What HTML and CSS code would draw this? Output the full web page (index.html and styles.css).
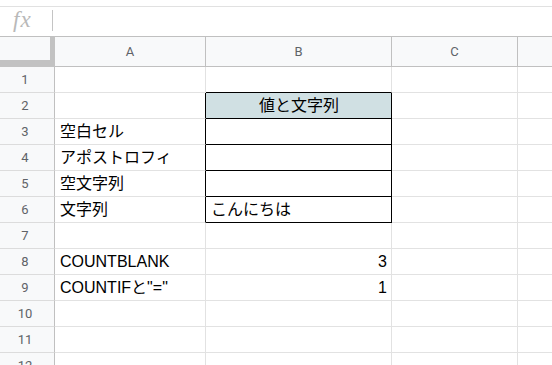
FILE: index.html
```html
<!DOCTYPE html>
<html lang="ja">
<head>
<meta charset="utf-8">
<title>Sheet</title>
<link rel="stylesheet" href="styles.css">
</head>
<body>
<div class="app">
  <div class="topstrip"></div>
  <div class="formula">
    <span class="fx">fx</span>
    <span class="fx-sep"></span>
  </div>
  <div class="sheet">
    <div class="corner"></div>
    <div class="colhead">A</div>
    <div class="colhead">B</div>
    <div class="colhead">C</div>
    <div class="colhead"></div>

    <div class="rowhead">1</div>
    <div class="cell"></div>
    <div class="cell box-top"></div>
    <div class="cell"></div>
    <div class="cell"></div>

    <div class="rowhead">2</div>
    <div class="cell box-left"></div>
    <div class="cell box title">値と文字列</div>
    <div class="cell"></div>
    <div class="cell"></div>

    <div class="rowhead">3</div>
    <div class="cell box-left">空白セル</div>
    <div class="cell box"></div>
    <div class="cell"></div>
    <div class="cell"></div>

    <div class="rowhead">4</div>
    <div class="cell box-left">アポストロフィ</div>
    <div class="cell box"></div>
    <div class="cell"></div>
    <div class="cell"></div>

    <div class="rowhead">5</div>
    <div class="cell box-left">空文字列</div>
    <div class="cell box"></div>
    <div class="cell"></div>
    <div class="cell"></div>

    <div class="rowhead">6</div>
    <div class="cell box-left">文字列</div>
    <div class="cell box">こんにちは</div>
    <div class="cell"></div>
    <div class="cell"></div>

    <div class="rowhead">7</div>
    <div class="cell"></div>
    <div class="cell"></div>
    <div class="cell"></div>
    <div class="cell"></div>

    <div class="rowhead">8</div>
    <div class="cell">COUNTBLANK</div>
    <div class="cell num">3</div>
    <div class="cell"></div>
    <div class="cell"></div>

    <div class="rowhead">9</div>
    <div class="cell">COUNTIFと"="</div>
    <div class="cell num">1</div>
    <div class="cell"></div>
    <div class="cell"></div>

    <div class="rowhead">10</div>
    <div class="cell"></div>
    <div class="cell"></div>
    <div class="cell"></div>
    <div class="cell"></div>

    <div class="rowhead">11</div>
    <div class="cell"></div>
    <div class="cell"></div>
    <div class="cell"></div>
    <div class="cell"></div>

    <div class="rowhead">12</div>
    <div class="cell"></div>
    <div class="cell"></div>
    <div class="cell"></div>
    <div class="cell"></div>
  </div>
</div>
</body>
</html>
```

FILE: styles.css
```css
* {
  box-sizing: border-box;
}

html, body {
  margin: 0;
  padding: 0;
  background: #ffffff;
}

.app {
  width: 552px;
  height: 365px;
  overflow: hidden;
  font-family: "Liberation Sans", Arial, "Noto Sans CJK JP", sans-serif;
}

/* thin strip above the formula bar */
.topstrip {
  height: 7px;
  border-bottom: 1px solid #e1e1e1;
}

.formula {
  height: 29px;
  display: flex;
  align-items: center;
  padding-left: 13px;
}

.fx {
  font-family: "Liberation Serif", "Times New Roman", serif;
  font-style: italic;
  font-size: 23px;
  color: #b9b9b9;
  line-height: 1;
  margin-top: -5px;
  letter-spacing: 1px;
}

.fx-sep {
  width: 1px;
  height: 21px;
  background: #c4c4c4;
  margin-left: 20px;
  margin-top: -3px;
}

/* spreadsheet grid */
.sheet {
  display: grid;
  grid-template-columns: 55px 151px 186px 126px 200px;
  grid-template-rows: 31px;
  grid-auto-rows: 26px;
}

.corner,
.colhead {
  background: #f8f9fa;
  border-top: 1px solid #c0c0c0;
  border-bottom: 1px solid #c0c0c0;
  border-right: 1px solid #c0c0c0;
}

/* freeze handles in the top-left corner */
.corner {
  border-right: 5px solid #c2c2c2;
  border-bottom: 7px solid #c2c2c2;
}

.colhead {
  display: flex;
  align-items: center;
  justify-content: center;
  font-family: "Roboto", "Liberation Sans", sans-serif;
  font-size: 13px;
  color: #5f6368;
}

.rowhead {
  background: #f8f9fa;
  border-right: 1px solid #c0c0c0;
  border-bottom: 1px solid #dcdcdc;
  display: flex;
  align-items: center;
  justify-content: center;
  padding-right: 4px;
  font-family: "Roboto", "Liberation Sans", sans-serif;
  font-size: 13px;
  color: #5f6368;
}

.cell {
  border-right: 1px solid #e2e2e2;
  border-bottom: 1px solid #e2e2e2;
  padding: 0 4px 0 5px;
  font-size: 16px;
  line-height: 25px;
  color: #000000;
  white-space: nowrap;
  overflow: hidden;
}

.num {
  text-align: right;
}

/* bordered table in column B */
.box-top {
  border-bottom-color: #000000;
}

.box-left {
  border-right-color: #000000;
}

.box {
  border-right-color: #000000;
  border-bottom-color: #000000;
}

.title {
  background: #d0e0e3;
  text-align: center;
}
```
